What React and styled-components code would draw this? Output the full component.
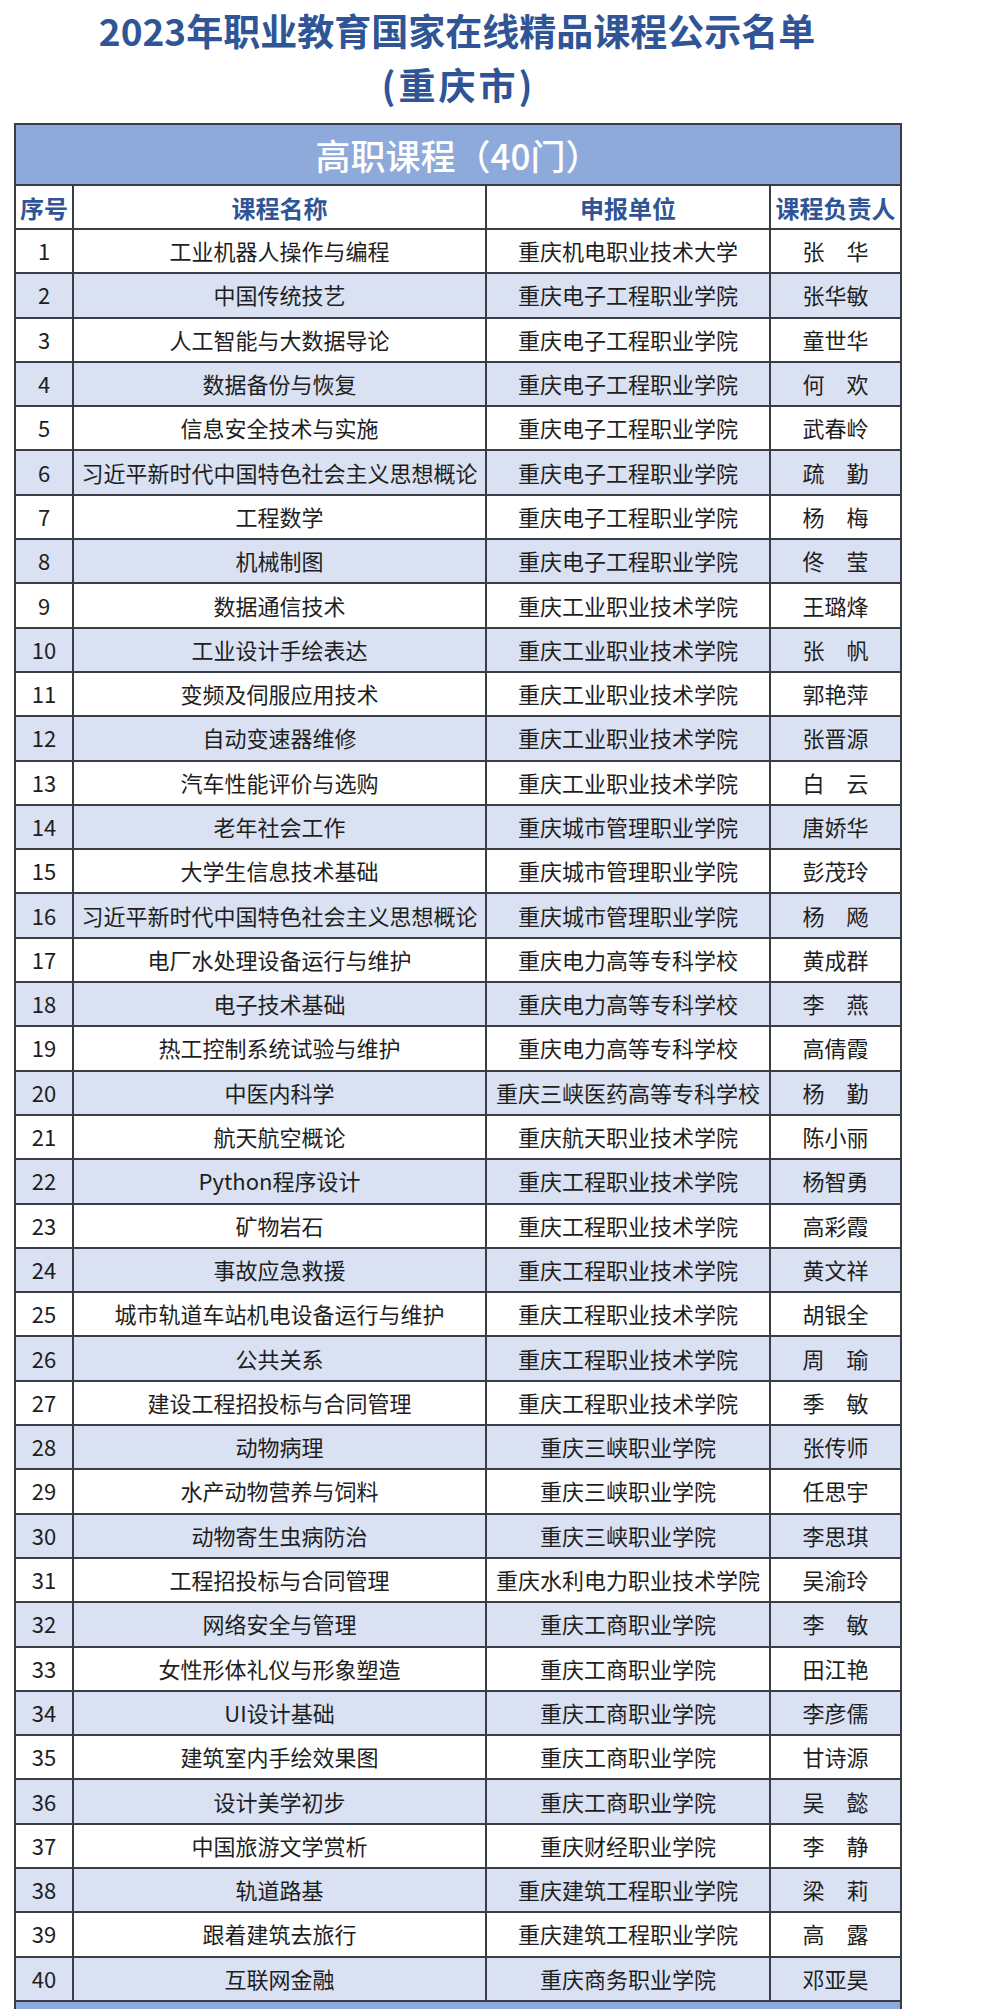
import React from 'react';
import styled, { createGlobalStyle } from 'styled-components';

const GlobalStyle = createGlobalStyle`
  html, body {
    margin: 0;
    padding: 0;
    background: #fff;
  }
  body {
    font-family: "Noto Sans CJK SC", "Noto Sans", sans-serif;
    color: #1e1e1e;
  }
`;

const Page = styled.div`
  width: 886px;
  margin-left: 14px;
  padding-top: 3px;
`;

const Title = styled.h1`
  margin: 0 0 12px;
  text-align: center;
  font-size: 37px;
  line-height: 54px;
  font-weight: 700;
  color: #2f5597;
`;

const SubTitle = styled.span`
  display: inline-block;
  letter-spacing: 3px;
  padding-left: 3px;
`;

const Table = styled.table`
  width: 886px;
  table-layout: fixed;
  border-collapse: collapse;
  border: 2px solid #3a3d44;
`;

const BandRow = styled.tr`
  height: 61px;
  background: #8eaadb;
`;

const BandCell = styled.td`
  border: 2px solid #3a3d44;
  padding: 0;
  text-align: center;
  color: #fff;
  font-size: 35px;
  font-weight: 500;
`;

const HeadRow = styled.tr`
  height: 44px;
  background: #fff;
`;

const HeadCell = styled.th`
  border: 2px solid #3a3d44;
  padding: 0;
  text-align: center;
  font-size: 24px;
  font-weight: 700;
  color: #2f5597;
  white-space: nowrap;
`;

const Row = styled.tr`
  height: 44.3px;
  background: ${(p) => (p.$alt ? '#d9e1f2' : '#fff')};
`;

const Cell = styled.td`
  border: 2px solid #3a3d44;
  padding: 0 0 2px;
  text-align: center;
  font-size: 22px;
  line-height: 1;
  color: #1e1e1e;
  white-space: nowrap;
  overflow: hidden;
`;

const courses = [
  ['工业机器人操作与编程', '重庆机电职业技术大学', '张　华'],
  ['中国传统技艺', '重庆电子工程职业学院', '张华敏'],
  ['人工智能与大数据导论', '重庆电子工程职业学院', '童世华'],
  ['数据备份与恢复', '重庆电子工程职业学院', '何　欢'],
  ['信息安全技术与实施', '重庆电子工程职业学院', '武春岭'],
  ['习近平新时代中国特色社会主义思想概论', '重庆电子工程职业学院', '疏　勤'],
  ['工程数学', '重庆电子工程职业学院', '杨　梅'],
  ['机械制图', '重庆电子工程职业学院', '佟　莹'],
  ['数据通信技术', '重庆工业职业技术学院', '王璐烽'],
  ['工业设计手绘表达', '重庆工业职业技术学院', '张　帆'],
  ['变频及伺服应用技术', '重庆工业职业技术学院', '郭艳萍'],
  ['自动变速器维修', '重庆工业职业技术学院', '张晋源'],
  ['汽车性能评价与选购', '重庆工业职业技术学院', '白　云'],
  ['老年社会工作', '重庆城市管理职业学院', '唐娇华'],
  ['大学生信息技术基础', '重庆城市管理职业学院', '彭茂玲'],
  ['习近平新时代中国特色社会主义思想概论', '重庆城市管理职业学院', '杨　飏'],
  ['电厂水处理设备运行与维护', '重庆电力高等专科学校', '黄成群'],
  ['电子技术基础', '重庆电力高等专科学校', '李　燕'],
  ['热工控制系统试验与维护', '重庆电力高等专科学校', '高倩霞'],
  ['中医内科学', '重庆三峡医药高等专科学校', '杨　勤'],
  ['航天航空概论', '重庆航天职业技术学院', '陈小丽'],
  ['Python程序设计', '重庆工程职业技术学院', '杨智勇'],
  ['矿物岩石', '重庆工程职业技术学院', '高彩霞'],
  ['事故应急救援', '重庆工程职业技术学院', '黄文祥'],
  ['城市轨道车站机电设备运行与维护', '重庆工程职业技术学院', '胡银全'],
  ['公共关系', '重庆工程职业技术学院', '周　瑜'],
  ['建设工程招投标与合同管理', '重庆工程职业技术学院', '季　敏'],
  ['动物病理', '重庆三峡职业学院', '张传师'],
  ['水产动物营养与饲料', '重庆三峡职业学院', '任思宇'],
  ['动物寄生虫病防治', '重庆三峡职业学院', '李思琪'],
  ['工程招投标与合同管理', '重庆水利电力职业技术学院', '吴渝玲'],
  ['网络安全与管理', '重庆工商职业学院', '李　敏'],
  ['女性形体礼仪与形象塑造', '重庆工商职业学院', '田江艳'],
  ['UI设计基础', '重庆工商职业学院', '李彦儒'],
  ['建筑室内手绘效果图', '重庆工商职业学院', '甘诗源'],
  ['设计美学初步', '重庆工商职业学院', '吴　懿'],
  ['中国旅游文学赏析', '重庆财经职业学院', '李　静'],
  ['轨道路基', '重庆建筑工程职业学院', '梁　莉'],
  ['跟着建筑去旅行', '重庆建筑工程职业学院', '高　露'],
  ['互联网金融', '重庆商务职业学院', '邓亚昊'],
];

const App = () => {
  return (
    <Page>
      <GlobalStyle />
      <Title>
        2023年职业教育国家在线精品课程公示名单
        <br />
        <SubTitle>(重庆市)</SubTitle>
      </Title>
      <Table>
        <colgroup>
          <col style={{ width: 58 }} />
          <col style={{ width: 413 }} />
          <col style={{ width: 284 }} />
          <col style={{ width: 131 }} />
        </colgroup>
        <tbody>
          <BandRow>
            <BandCell colSpan={4}>高职课程（40门）</BandCell>
          </BandRow>
          <HeadRow>
            <HeadCell>序号</HeadCell>
            <HeadCell>课程名称</HeadCell>
            <HeadCell>申报单位</HeadCell>
            <HeadCell>课程负责人</HeadCell>
          </HeadRow>
          {courses.map(([name, unit, person], i) => (
            <Row key={i} $alt={i % 2 === 1}>
              <Cell>{i + 1}</Cell>
              <Cell>{name}</Cell>
              <Cell>{unit}</Cell>
              <Cell>{person}</Cell>
            </Row>
          ))}
          <BandRow>
            <BandCell colSpan={4} />
          </BandRow>
        </tbody>
      </Table>
    </Page>
  );
};

export default App;
